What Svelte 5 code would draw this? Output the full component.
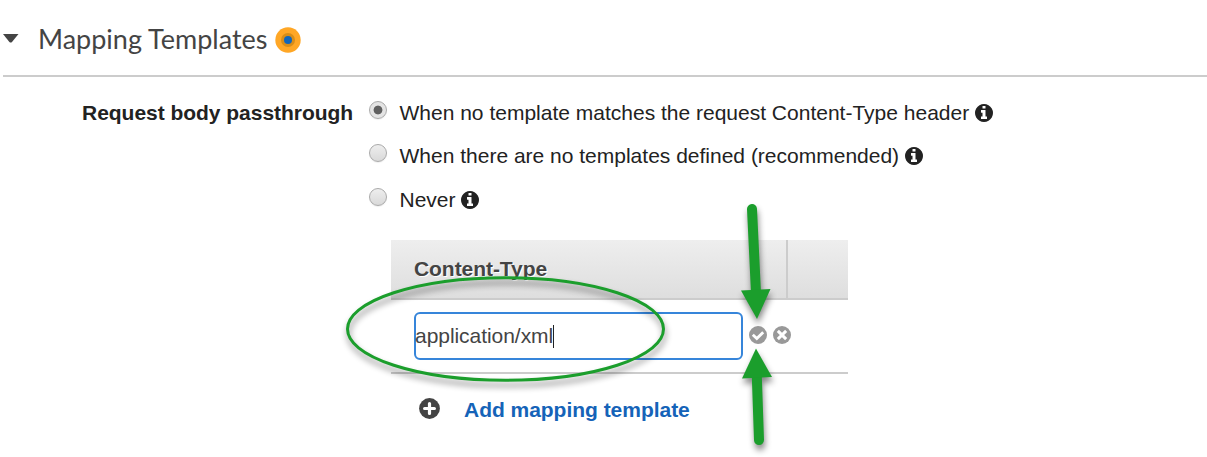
<script>
  const options = [
    { label: 'When no template matches the request Content-Type header', width: 569 },
    { label: 'When there are no templates defined (recommended)', width: 499 },
    { label: 'Never', width: 55 }
  ];
  let selected = $state(0);
</script>

{#snippet info()}
  <svg class="info" viewBox="0 128 1536 1536" aria-hidden="true">
    <path fill="#222" d="M1024 1376v-160q0-14-9-23t-23-9h-96v-512q0-14-9-23t-23-9h-320q-14 0-23 9t-9 23v160q0 14 9 23t23 9h96v320h-96q-14 0-23 9t-9 23v160q0 14 9 23t23 9h448q14 0 23-9t9-23zm-128-896v-160q0-14-9-23t-23-9h-192q-14 0-23 9t-9 23v160q0 14 9 23t23 9h192q14 0 23-9t9-23zm640 416q0 209-103 385.5t-279.5 279.5-385.5 103-385.5-103-279.5-279.5-103-385.5 103-385.5 279.5-279.5 385.5-103 385.5 103 279.5 279.5 103 385.5z" />
  </svg>
{/snippet}

<main>
  <header>
    <svg class="caret" viewBox="0 0 16 9" aria-hidden="true"><path d="M0 0h15.5L9 8q-1.3 1.2-2.6 0z" fill="#444" /></svg>
    <h1>Mapping Templates</h1>
    <svg class="beacon" viewBox="0 0 26 26" aria-hidden="true">
      <circle cx="13" cy="13" r="12.7" fill="#ffa726" />
      <circle cx="13" cy="13" r="7" fill="#d88d18" />
      <circle cx="13" cy="13" r="4" fill="#1166bb" />
    </svg>
  </header>

  <section class="passthrough">
    <div class="field">Request body passthrough</div>
    <div class="options">
      {#each options as option, i}
        <div class="option">
          <button class="radio" class:on={selected === i} aria-label={option.label} onclick={() => (selected = i)}></button>
          <span class="text" style:width="{option.width}px">{option.label}</span>
          {@render info()}
        </div>
      {/each}
    </div>
  </section>

  <section class="table">
    <div class="head"><div class="name">Content-Type</div><div class="tools"></div></div>
    <div class="row">
      <div class="input"><span>application/xml</span><i></i></div>
      <svg class="action" viewBox="0 0 18 18" aria-hidden="true">
        <circle cx="9" cy="9" r="9" fill="#999" />
        <path d="M3.8 8.8 7.8 12.6 14.2 6.2" fill="none" stroke="#fff" stroke-width="2.8" />
      </svg>
      <svg class="action" viewBox="0 0 18 18" aria-hidden="true">
        <circle cx="9" cy="9" r="9" fill="#999" />
        <path d="m5.9 5.9 6.2 6.2m0-6.2-6.2 6.2" stroke="#fff" stroke-width="3" stroke-linecap="square" stroke-linejoin="round" />
      </svg>
    </div>
  </section>

  <div class="add">
    <svg viewBox="0 0 21 21" aria-hidden="true">
      <circle cx="10.5" cy="10.5" r="10.4" fill="#444" />
      <path d="M10.5 5.6v9.8M5.600 10.500h9.8" stroke="#fff" stroke-width="3.2" stroke-linecap="round" />
    </svg>
    <span>Add mapping template</span>
  </div>

  <svg class="notes" viewBox="0 0 1207 457" aria-hidden="true">
    <ellipse cx="505.5" cy="329" rx="158" ry="51.3" fill="none" stroke="#1b9e2c" stroke-width="3" />
    <g fill="#1b9e2c" stroke="#1b9e2c">
      <path d="m752 209 4 84" stroke-width="10" stroke-linecap="round" />
      <path d="m741 290.500 29.500-1.500-13.500 30z" stroke="none" />
      <path d="m759 440-2.300-67" stroke-width="10" stroke-linecap="round" />
      <path d="m742 378.500 30-1.500-16-28.500z" stroke="none" />
    </g>
  </svg>
</main>

<style>
  :global(body) { margin: 0; background: #fff; }
  main {
    position: relative;
    width: 1207px;
    height: 457px;
    overflow: hidden;
    font: 21px/26px "Liberation Sans", Arial, sans-serif;
    color: #222;
  }
  header {
    display: flex;
    align-items: flex-start;
    box-sizing: border-box;
    height: 77px;
    margin-left: 3px;
    border-bottom: 2px solid #ccc;
  }
  .caret { width: 16px; height: 9px; margin-top: 34px; }
  h1 {
    width: 230px;
    margin: 21px 0 0 19px;
    font: 400 27px/36px Lato, sans-serif;
    color: #444;
    white-space: nowrap;
  }
  .beacon { width: 26px; height: 26px; margin: 27px 0 0 7px; }
  .passthrough { display: flex; height: 163px; }
  .field { width: 287px; margin-top: 23px; padding-left: 82px; font-weight: 700; letter-spacing: -0.03px; white-space: nowrap; }
  .options { padding-top: 23px; }
  .option { display: flex; align-items: flex-start; height: 44px; }
  .option:first-child { height: 43px; }
  .radio {
    box-sizing: border-box;
    width: 18px;
    height: 18px;
    margin: 1px 12.5px 0 0;
    padding: 0;
    border: 1px solid #aaa;
    border-radius: 50%;
    background: linear-gradient(#eee, #d9d9d9);
    box-shadow: 0 1px 1px #0001;
  }
  .radio.on { background: radial-gradient(circle, #606060 0 4px, #e4e4e4 4.8px); }
  .text { white-space: nowrap; }
  .info { width: 18px; height: 18px; margin: 4px 0 0 6px; }
  .table { width: 457px; margin-left: 391px; }
  .head {
    display: flex;
    box-sizing: border-box;
    height: 60px;
    border-bottom: 2px solid #ccc;
    background: linear-gradient(#eee, #dedede);
    color: #444;
    font-weight: 700;
    letter-spacing: -0.06px;
    line-height: 58px;
    text-shadow: 1px 1px 0 #fff;
  }
  .name { box-sizing: border-box; width: 397px; padding-left: 23px; border-right: 2px solid #ccc; }
  .row {
    display: flex;
    align-items: flex-start;
    box-sizing: border-box;
    height: 74px;
    padding: 12px 0 0 23px;
    border-bottom: 2px solid #ccc;
  }
  .input {
    display: flex;
    align-items: center;
    box-sizing: border-box;
    width: 329px;
    height: 48px;
    border: 2px solid #3685da;
    border-radius: 6px;
    color: #444;
  }
  .input span { margin-left: -1px; letter-spacing: -0.05px; }
  .input i { width: 1px; height: 23px; background: #222; }
  .action { width: 18px; height: 18px; margin: 14px 0 0 6px; }
  .add { display: flex; margin: 23px 0 0 419px; color: #1563b8; font-weight: 700; letter-spacing: -0.03px; }
  .add svg { width: 21px; height: 21px; margin-top: 1px; }
  .add span { margin-left: 24px; white-space: nowrap; }
  .notes {
    position: absolute;
    inset: 0;
    width: 1207px;
    height: 457px;
    pointer-events: none;
    filter: drop-shadow(1px 5px 3px #0007);
  }
</style>
